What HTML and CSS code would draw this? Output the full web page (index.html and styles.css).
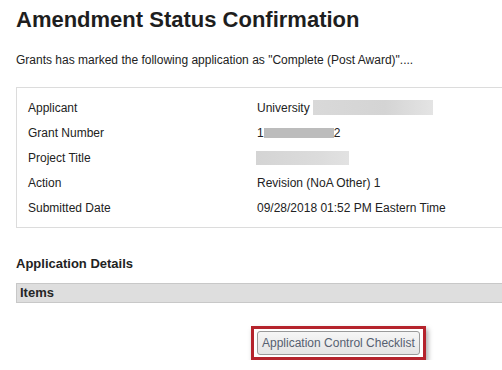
FILE: index.html
```html
<!DOCTYPE html>
<html lang="en">
<head>
    <meta charset="UTF-8">
    <title>Amendment Status Confirmation</title>
    <link rel="stylesheet" href="styles.css">
</head>
<body>
    <div id="page">
        <h1>Amendment Status Confirmation</h1>
        <p class="intro">Grants has marked the following application as "Complete (Post Award)"....</p>

        <div id="summary">
            <div class="row"><span class="label">Applicant</span><span class="value">University <span class="redact redactWide"></span></span></div>
            <div class="row"><span class="label">Grant Number</span><span class="value">1<span class="redact redactNum"></span>2</span></div>
            <div class="row"><span class="label">Project Title</span><span class="value"><span class="redact redactTitle"></span></span></div>
            <div class="row"><span class="label">Action</span><span class="value">Revision (NoA Other) 1</span></div>
            <div class="row"><span class="label">Submitted Date</span><span class="value">09/28/2018 01:52 PM Eastern Time</span></div>
        </div>

        <h2>Application Details</h2>
        <div id="itemsBar">Items</div>

        <div id="actions">
            <div class="highlight">
                <button type="button" id="checklistBtn">Application Control Checklist</button>
            </div>
        </div>
    </div>
</body>
</html>
```

FILE: styles.css
```css
html, body {
    margin: 0;
    padding: 0;
    overflow: hidden;
    background-color: #FFFFFF;
}

* {
    box-sizing: border-box;
}

body {
    font-family: "Liberation Sans", Arial, sans-serif;
    font-size: 12px;
    color: #222222;
}

#page {
    padding: 6px 0 0 16px;
}

h1 {
    font-size: 22px;
    font-weight: bold;
    margin: 0;
    line-height: 28px;
    color: #1e1e1e;
}

.intro {
    margin: 19px 0 0 0;
    line-height: 14px;
}

#summary {
    margin-top: 20px;
    border: 1px solid #dcdcdc;
    border-right: none;
    padding: 7px 11px 8px 11px;
    height: 141px;
}

.row {
    display: flex;
    height: 25px;
    align-items: center;
}

.label {
    width: 229px;
}

.value {
    display: flex;
    align-items: center;
}

.redact {
    display: inline-block;
}

.redactWide {
    width: 120px;
    height: 15px;
    margin-left: 3px;
    background: linear-gradient(90deg, #d9d9d9, #d4d4d4 60%, #e4e4e4);
}

.redactNum {
    width: 70px;
    height: 10px;
    background-color: #bcbcbc;
}

.redactTitle {
    width: 93px;
    height: 14px;
    margin-left: -1px;
    background: linear-gradient(90deg, #d4d4d4, #dcdcdc 70%, #e2e2e2);
}

h2 {
    font-size: 13px;
    font-weight: bold;
    margin: 28px 0 0 0;
    line-height: 16px;
}

#itemsBar {
    margin-top: 11px;
    height: 20px;
    line-height: 18px;
    padding-left: 3px;
    background-color: #dedede;
    border: 1px solid #c8c8c8;
    border-right: none;
    font-size: 13px;
    font-weight: bold;
    color: #262626;
}

#actions {
    display: flex;
    padding: 23px 0 0 235px;
}

.highlight {
    border: 3px solid #b5232c;
    padding: 2px 3px;
    box-shadow: 2px 3px 5px rgba(0, 0, 0, 0.35);
}

#checklistBtn {
    font-family: "Liberation Sans", Arial, sans-serif;
    font-size: 12px;
    color: #566070;
    height: 24px;
    padding: 0 4px;
    border: 1px solid #9a9a9a;
    border-radius: 3px;
    background: linear-gradient(#f6f6f6, #e4e4e4);
}
```
